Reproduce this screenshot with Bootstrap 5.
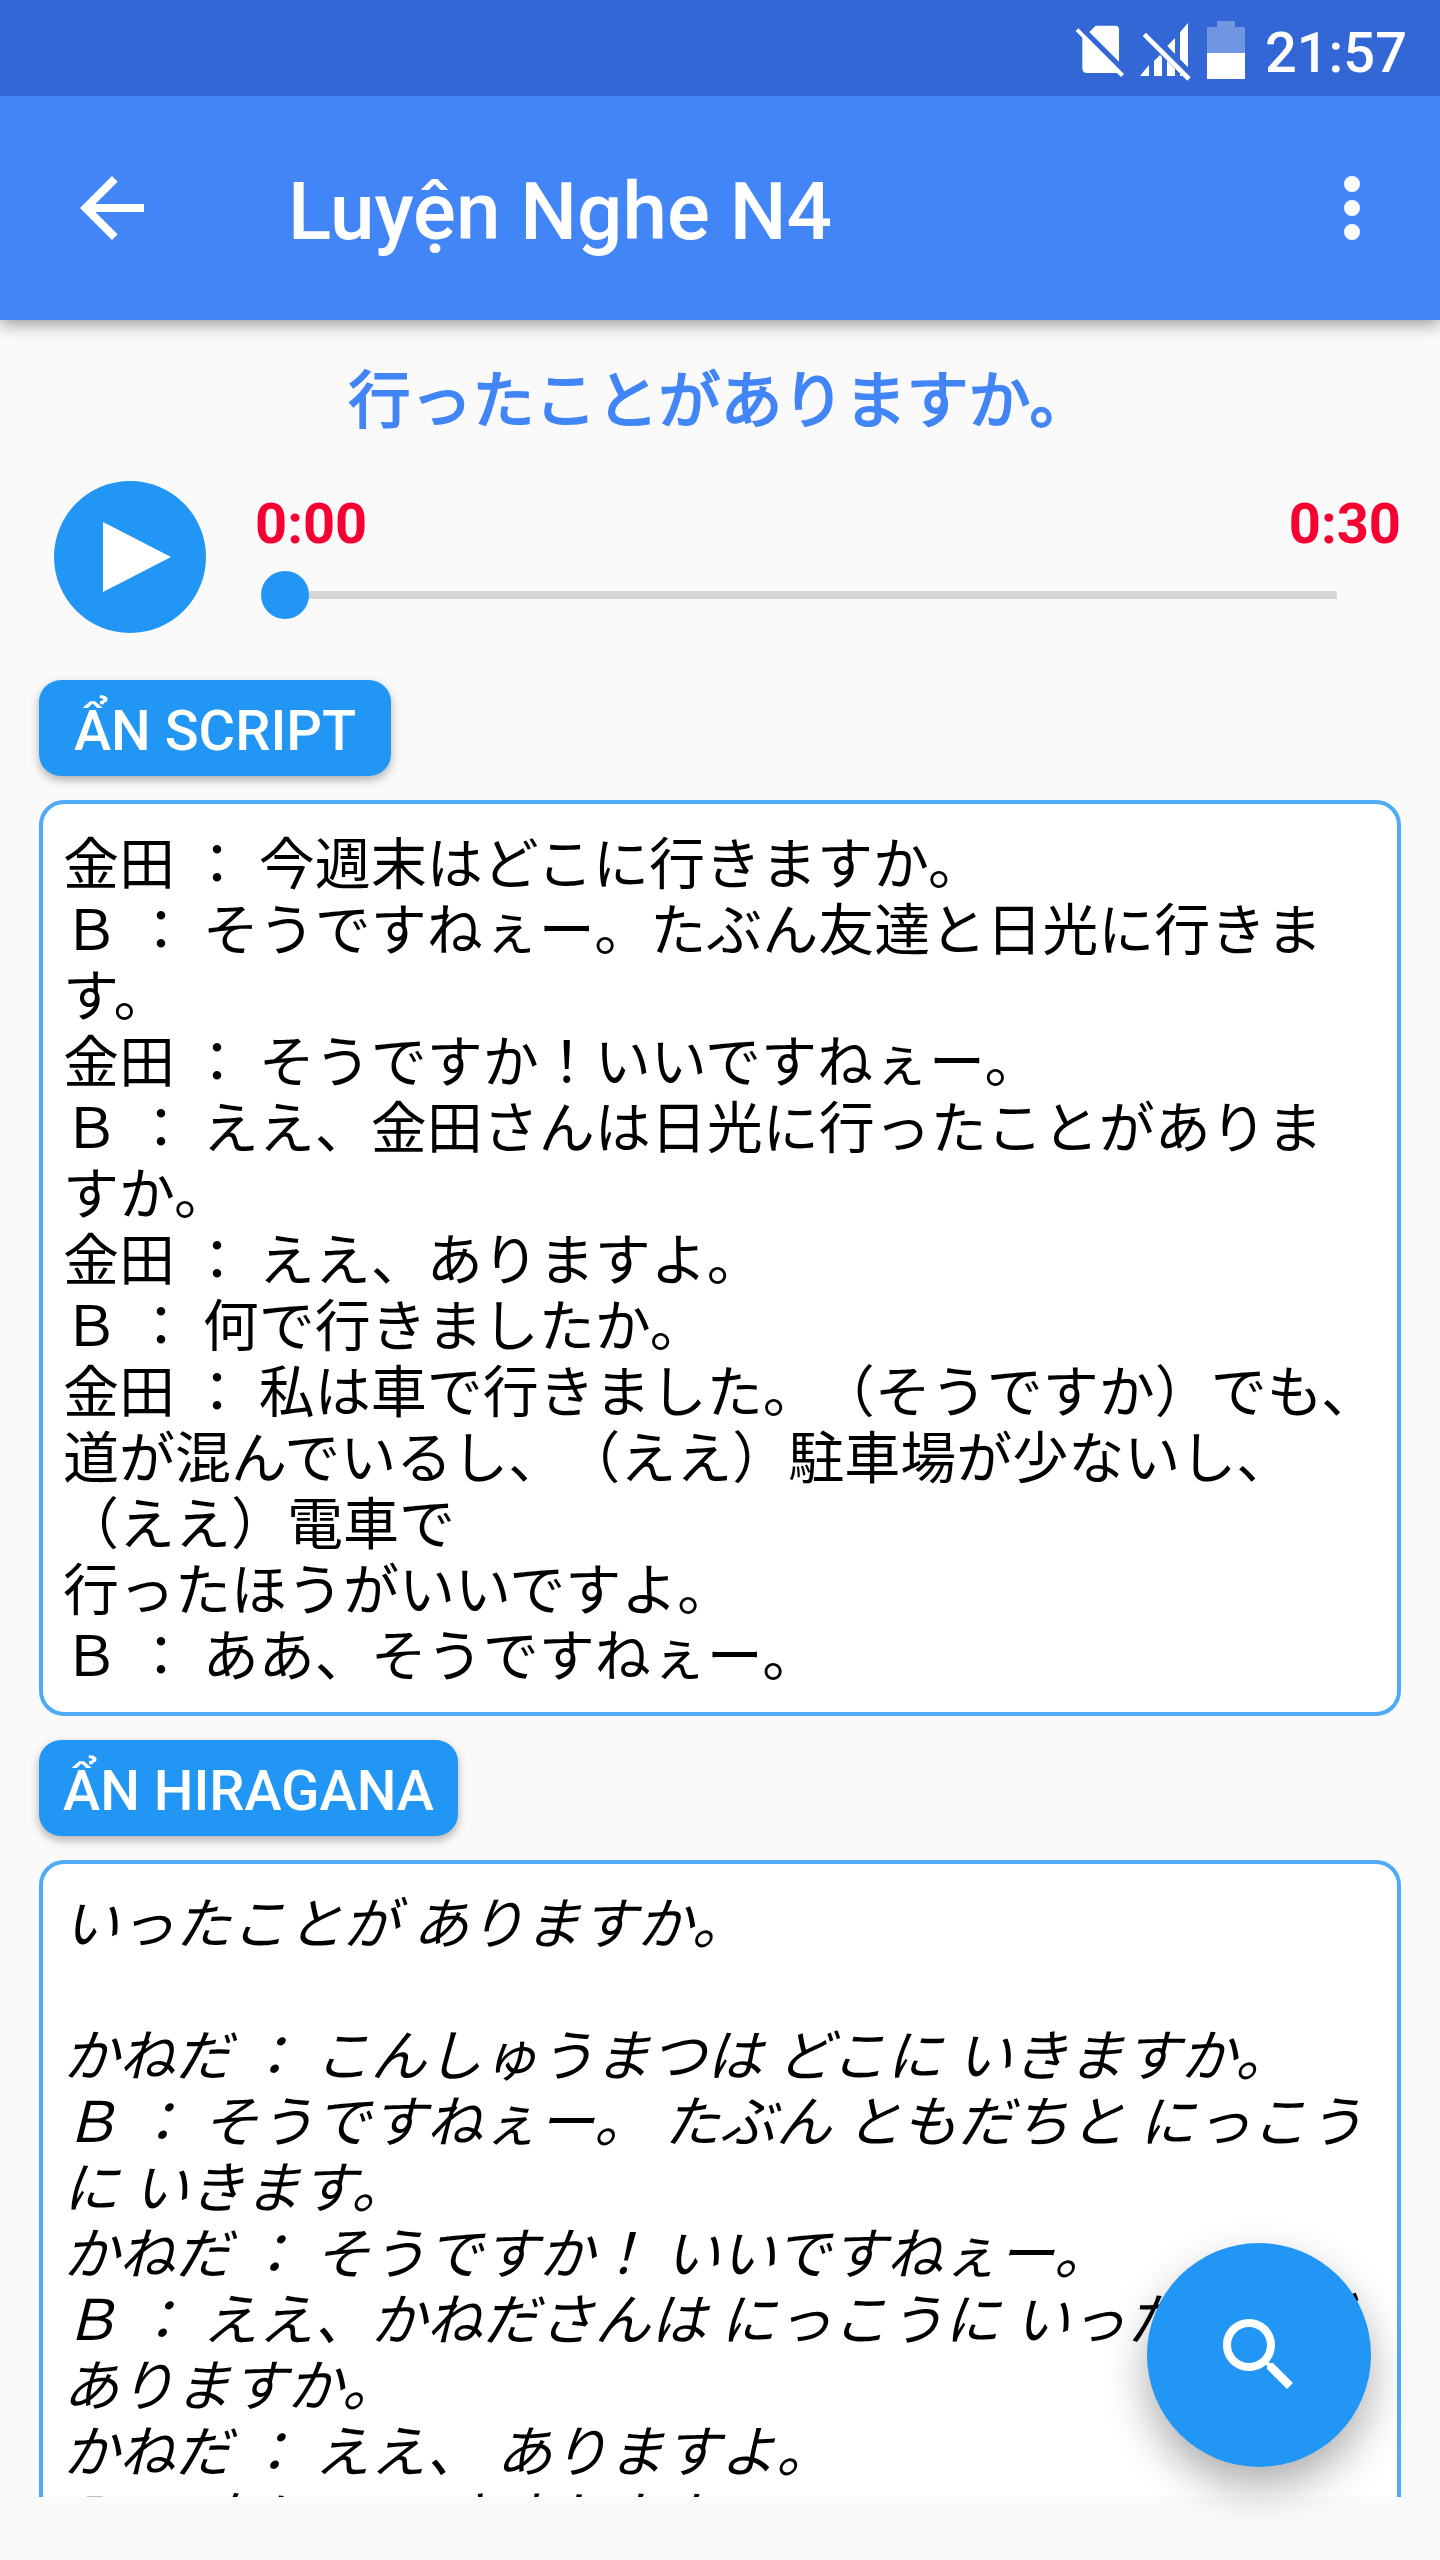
<!DOCTYPE html>
<html lang="vi">
<head>
<meta charset="utf-8">
<meta name="viewport" content="width=device-width, initial-scale=1">
<title>Luyện Nghe N4</title>
<link href="https://cdn.jsdelivr.net/npm/bootstrap@5.3.0/dist/css/bootstrap.min.css" rel="stylesheet">
<style>
  body { background: #fafafa; color: #000; font-family: Roboto, "Noto Sans CJK JP", sans-serif; font-size: 56px; line-height: 66px; }
  .status-bar { background: #3367d6; height: 96px; padding: 6px 33px 0 0; gap: 14px; color: #fff; font-weight: 500; z-index: 3; }
  .status-bar time { margin-left: 6px; padding-top: 4px; }
  .app-bar { background: #4285f6; height: 224px; padding: 0 40px 0 64px; box-shadow: 0 4px 16px rgba(0,0,0,.4); z-index: 2; }
  .app-bar h1 { font-size: 80px; line-height: 96px; font-weight: 500; margin: 8px 0 0 128px; }
  .icon-btn { width: 96px; height: 96px; }
  .scroll-area { padding: 38px 39px 0; margin-bottom: 63px; min-height: 0; }
  .lesson-title { color: #4285f6; font-size: 62px; line-height: 88px; font-weight: 400; -webkit-text-stroke: 2px currentColor; margin-bottom: 35px; }
  .player { padding-left: 15px; gap: 49px; margin-bottom: 47px; }
  .play-btn { width: 152px; height: 152px; }
  .player-times { color: #f50233; font-weight: 700; margin-bottom: 14px; }
  .player-seek { padding-bottom: 4px; min-width: 0; }
  .seek-wrap { padding: 0 40px 0 6px; }
  .seek { -webkit-appearance: none; appearance: none; height: 48px; width: 100%; margin: 0;
    background: linear-gradient(#d6d6d6, #d6d6d6) center / calc(100% - 48px) 8px no-repeat; }
  .seek::-webkit-slider-thumb { -webkit-appearance: none; width: 48px; height: 48px; border-radius: 50%; background: #2196f5; border: 0; }
  .seek::-moz-range-thumb { width: 48px; height: 48px; border-radius: 50%; background: #2196f5; border: 0; }
  .toggle-btn, .toggle-btn:hover { background: #2196f5; color: #fff; border: 0; border-radius: 22px; font-size: 56px; line-height: 66px; font-weight: 500;
    height: 96px; min-width: 352px; padding: 5px 24px 0; box-shadow: 0 4px 10px rgba(0,0,0,.3); }
  .script-box { background: #fff; border: 4px solid #50abf6; border-radius: 25px; padding: 28px 18px 22px 20px; margin: 24px 0;
    white-space: pre-line; text-spacing-trim: space-all; line-break: strict; }
  .fab-search, .fab-search:hover { right: 69px; bottom: 93px; width: 224px; height: 224px; background: #2196f5; box-shadow: 0 20px 44px rgba(0,0,0,.32); z-index: 3; }
</style>
<script src="https://cdn.jsdelivr.net/npm/bootstrap@5.3.0/dist/js/bootstrap.bundle.min.js"></script>
</head>
<body class="vh-100 overflow-hidden d-flex flex-column">
<div class="status-bar position-relative d-flex align-items-center justify-content-end flex-shrink-0">
  <svg width="51" height="54" viewBox="102 72 153 162" fill="#fff" aria-hidden="true"><path d="M148 96L167 77H226Q237 77 237 88V185Z"/><path d="M107 93L115 85L252 222L243 231L231 219H141Q127 219 127 205V113Z"/></svg>
  <svg width="54" height="60" viewBox="294 63 162 180" fill="#fff" aria-hidden="true"><path d="M297 228L324 195V228ZM339 228V183L357 165L363 172V228ZM378 228V182L402 206V228ZM379 138L402 114V162ZM417 97L441 69V202L417 178ZM417 220L425 228H417Z"/><path d="M305 108L315 98L449 232L439 242Z"/></svg>
  <svg width="38" height="60" viewBox="501 63 114 180" fill="#fff" aria-hidden="true"><path opacity=".3" d="M531 63H585V81H615V159H501V81H531Z"/><path d="M501 159H615V237H501Z"/></svg>
  <time>21:57</time>
</div>
<header class="app-bar navbar flex-nowrap position-relative flex-shrink-0 text-white">
  <button type="button" class="icon-btn btn p-0 border-0 d-flex" aria-label="Quay lại">
    <svg width="96" height="96" viewBox="0 0 24 24" fill="#fff"><path d="M20 11H7.830l5.590-5.590L12 4l-8 8 8 8 1.410-1.410L7.830 13H20z"/></svg>
  </button>
  <h1 class="flex-grow-1 text-nowrap">Luyện Nghe N4</h1>
  <button type="button" class="icon-btn btn p-0 border-0 d-flex" aria-label="Tùy chọn khác">
    <svg width="96" height="96" viewBox="0 0 24 24" fill="#fff"><circle cx="12" cy="6" r="2"/><circle cx="12" cy="12" r="2"/><circle cx="12" cy="18" r="2"/></svg>
  </button>
</header>
<main class="scroll-area flex-grow-1 overflow-hidden">
  <h2 class="lesson-title text-center" lang="ja">行ったことがありますか。</h2>
  <section class="player d-flex align-items-center">
    <button type="button" class="play-btn btn p-0 border-0 rounded-circle d-flex flex-shrink-0" aria-label="Phát">
      <svg width="152" height="152" viewBox="0 0 152 152"><circle cx="76" cy="76" r="76" fill="#2196f5"/><path d="M49 41V111L117 76Z" fill="#fff"/></svg>
    </button>
    <div class="player-seek flex-grow-1">
      <div class="player-times d-flex justify-content-between"><span>0:00</span><span>0:30</span></div>
      <div class="seek-wrap d-flex"><input type="range" class="seek" min="0" max="30" value="0" aria-label="Vị trí phát"></div>
    </div>
  </section>
  <button type="button" class="toggle-btn btn d-block">ẨN SCRIPT</button>
  <div class="script-box" lang="ja">金田 ： 今週末はどこに行きますか。
Ｂ ： そうですねぇー。たぶん友達と日光に行きます。
金田 ： そうですか！いいですねぇー。
Ｂ ： ええ、金田さんは日光に行ったことがありま
すか。
金田 ： ええ、ありますよ。
Ｂ ： 何で行きましたか。
金田 ： 私は車で行きました。（そうですか）でも、道が混んでいるし、（ええ）駐車場が少ないし、（ええ）電車で
行ったほうがいいですよ。
Ｂ ： ああ、そうですねぇー。</div>
  <button type="button" class="toggle-btn btn d-block">ẨN HIRAGANA</button>
  <div class="script-box fst-italic" lang="ja">いったことが ありますか。

かねだ ： こんしゅうまつは どこに いきますか。
Ｂ ： そうですねぇー。 たぶん ともだちと にっこうに いきます。
かねだ ： そうですか！ いいですねぇー。
Ｂ ： ええ、かねださんは にっこうに いったことが ありますか。
かねだ ： ええ、 ありますよ。
Ｂ ： なにで いきましたか。</div>
</main>
<button type="button" class="fab-search btn p-0 border-0 rounded-circle position-fixed d-flex align-items-center justify-content-center" aria-label="Tìm kiếm">
  <svg width="96" height="96" viewBox="0 0 24 24" fill="#fff"><path d="M15.500 14h-.790l-.280-.270C15.410 12.590 16 11.110 16 9.500 16 5.910 13.090 3 9.500 3S3 5.910 3 9.500 5.910 16 9.500 16c1.610 0 3.090-.590 4.230-1.570l.270.280v.790l5 4.990L20.490 19l-4.990-5zm-6 0C7.010 14 5 11.990 5 9.500S7.010 5 9.500 5 14 7.010 14 9.500 11.990 14 9.500 14z"/></svg>
</button>
</body>
</html>
